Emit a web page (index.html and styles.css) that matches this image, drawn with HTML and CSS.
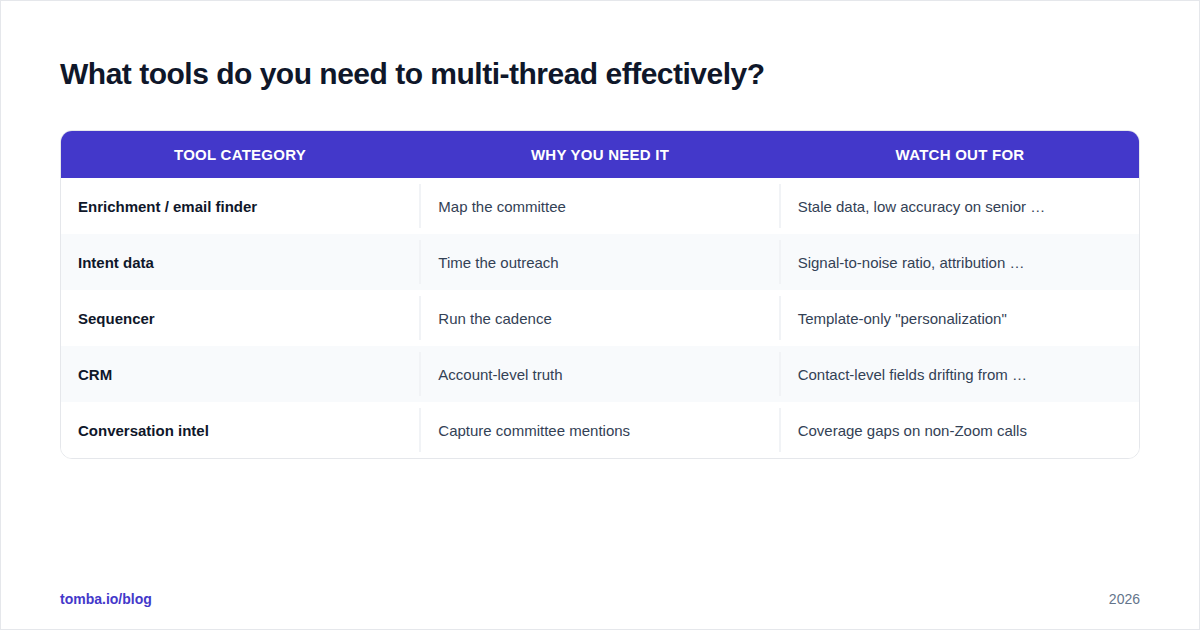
FILE: index.html
```html
<!DOCTYPE html>
<html>
<head>
<meta charset="utf-8">
<link rel="stylesheet" href="styles.css">
</head>
<body>
<div class="page">
  <h1 class="title">What tools do you need to multi-thread effectively?</h1>
  <div class="table">
    <div class="row head">
      <div class="cell">Tool category</div>
      <div class="cell">Why you need it</div>
      <div class="cell">Watch out for</div>
    </div>
    <div class="row">
      <div class="cell key">Enrichment / email finder</div>
      <div class="cell">Map the committee</div>
      <div class="cell">Stale data, low accuracy on senior …</div>
    </div>
    <div class="row alt">
      <div class="cell key">Intent data</div>
      <div class="cell">Time the outreach</div>
      <div class="cell">Signal-to-noise ratio, attribution …</div>
    </div>
    <div class="row">
      <div class="cell key">Sequencer</div>
      <div class="cell">Run the cadence</div>
      <div class="cell">Template-only "personalization"</div>
    </div>
    <div class="row alt">
      <div class="cell key">CRM</div>
      <div class="cell">Account-level truth</div>
      <div class="cell">Contact-level fields drifting from …</div>
    </div>
    <div class="row">
      <div class="cell key">Conversation intel</div>
      <div class="cell">Capture committee mentions</div>
      <div class="cell">Coverage gaps on non-Zoom calls</div>
    </div>
  </div>
  <div class="footer">
    <span class="brand">tomba.io/blog</span>
    <span class="year">2026</span>
  </div>
</div>
</body>
</html>
```
FILE: styles.css
```css
* { box-sizing: border-box; }
html, body { margin: 0; padding: 0; }
body {
  font-family: "Liberation Sans", Arial, sans-serif;
  background: #ffffff;
}
.page {
  width: 1200px;
  height: 630px;
  border: 1px solid #e5e7eb;
  padding: 55px 59px 0 59px;
  display: flex;
  flex-direction: column;
}
.title {
  margin: 0;
  font-size: 30px;
  line-height: 36px;
  font-weight: 700;
  color: #0f172a;
  letter-spacing: -0.5px;
}
.table {
  margin-top: 38px;
  border: 1px solid #e5e7eb;
  border-radius: 12px;
  overflow: hidden;
}
.row {
  display: grid;
  grid-template-columns: repeat(3, 1fr);
  height: 56px;
  padding: 6px 0;
  background: #ffffff;
}
.row.alt { background: #f8fafc; }
.row.head {
  height: 48px;
  padding: 0;
  background: #4338ca;
  margin-top: -1px;
  margin-left: -1px;
  margin-right: -1px;
}
.cell {
  display: flex;
  align-items: center;
  padding-left: 17px;
  font-size: 15px;
  color: #334155;
  white-space: nowrap;
}
.body-row-sep,
.row:not(.head) .cell + .cell {
  border-left: 2px solid #f1f3f6;
  margin-left: -1px;
}
.cell.key {
  font-weight: 700;
  color: #0f172a;
}
.row.head .cell {
  justify-content: center;
  padding: 1px 0 0 0;
  border: none;
  color: #ffffff;
  font-size: 15px;
  font-weight: 700;
  text-transform: uppercase;
  letter-spacing: 0.25px;
}
.footer {
  margin-top: auto;
  height: 38px;
  display: flex;
  justify-content: space-between;
  align-items: flex-start;
  font-size: 14px;
  line-height: 16px;
}
.brand {
  color: #4338ca;
  font-weight: 700;
}
.year {
  color: #64748b;
}
```
